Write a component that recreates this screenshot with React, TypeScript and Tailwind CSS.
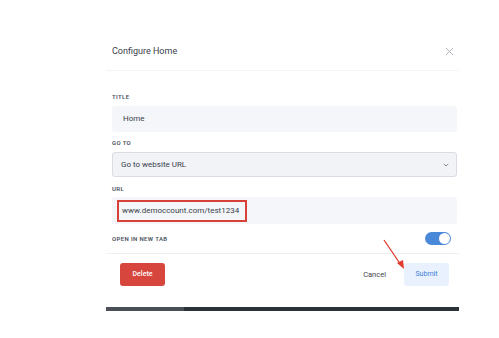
import React from "react";

function Label({ children }: { children: React.ReactNode }) {
  return (
    <p className="text-[6px] leading-[8px] font-semibold tracking-[0.06em] text-[#4b5260]">
      {children}
    </p>
  );
}

export default function App() {
  return (
    <div className="relative w-[499px] h-[338px] bg-white font-['Roboto',sans-serif] overflow-hidden">
      <div className="ml-[106px] pt-[31px] w-[353px]">
        {/* Header */}
        <div className="h-[40px] flex items-center justify-between pl-[6px] pr-[5px] border-b border-[#f3f4f7]">
          <span className="text-[9px] text-[#3a414c] mt-[2px]">Configure Home</span>
          <svg width="9" height="9" viewBox="0 0 10 10" className="text-[#a9aeb5] mt-[2px]">
            <path d="M1 1L9 9M9 1L1 9" stroke="currentColor" strokeWidth="1" />
          </svg>
        </div>

        {/* Body */}
        <div className="pl-[6px] pr-[2px] pt-[22px]">
          <Label>TITLE</Label>
          <div className="mt-[5px] h-[26px] rounded-[3px] bg-[#f4f6f9] flex items-center pl-[11px] text-[8px] text-[#3a414c]">
            Home
          </div>

          <div className="mt-[7px]">
            <Label>GO TO</Label>
          </div>
          <div className="mt-[5px] h-[25px] rounded-[3px] bg-[#f1f3f7] border border-[#d8dce3] flex items-center justify-between pl-[8px] pr-[7px] text-[8px] text-[#3a414c]">
            <span>Go to website URL</span>
            <svg width="6" height="4" viewBox="0 0 6 4">
              <path d="M0.7 0.8L3 3L5.3 0.8" fill="none" stroke="#7a818b" strokeWidth="0.9" />
            </svg>
          </div>

          <div className="mt-[8px]">
            <Label>URL</Label>
          </div>
          <div className="mt-[4px] h-[27px] rounded-[3px] bg-[#f4f6f9] flex items-center pl-[5px]">
            <span className="h-[22px] w-[130px] border-2 border-[#d8413a] flex items-center pl-[3px] text-[8px] text-[#3a414c]">
              www.democcount.com/test1234
            </span>
          </div>

          <div className="mt-[8px] h-[13px] flex items-center justify-between pr-[6px]">
            <Label>OPEN IN NEW TAB</Label>
            <div className="w-[26px] h-[13px] rounded-full bg-[#4a88d9] relative">
              <div className="absolute right-[1px] top-[1px] w-[11px] h-[11px] rounded-full bg-white" />
            </div>
          </div>
        </div>

        <div className="mt-[8px] border-b border-[#eef0f3]" />

        {/* Footer */}
        <div className="flex items-center justify-between pl-[14px] pr-[10px] pt-[9px]">
          <button className="w-[45px] h-[23px] rounded-[3px] bg-[#d7463d] text-white text-[7px] font-medium">
            Delete
          </button>
          <div className="flex items-center gap-[18px]">
            <span className="text-[7.5px] text-[#3f454e]">Cancel</span>
            <button className="w-[45px] h-[23px] rounded-[3px] bg-[#e8f1fd] text-[#3d7fd6] text-[7px]">
              Submit
            </button>
          </div>
        </div>

        <div className="mt-[21px] h-[4px] flex">
          <div className="w-[78px] bg-[#4b5057]" />
          <div className="flex-1 bg-[#2c3137]" />
        </div>
      </div>

      {/* annotation arrow */}
      <svg className="absolute left-0 top-0" width="499" height="338" viewBox="0 0 499 338">
        <path d="M384 240L401 265" stroke="#e0392d" strokeWidth="1.3" fill="none" />
        <path d="M397 263L404 269L403 260Z" fill="#e0392d" />
      </svg>
    </div>
  );
}
